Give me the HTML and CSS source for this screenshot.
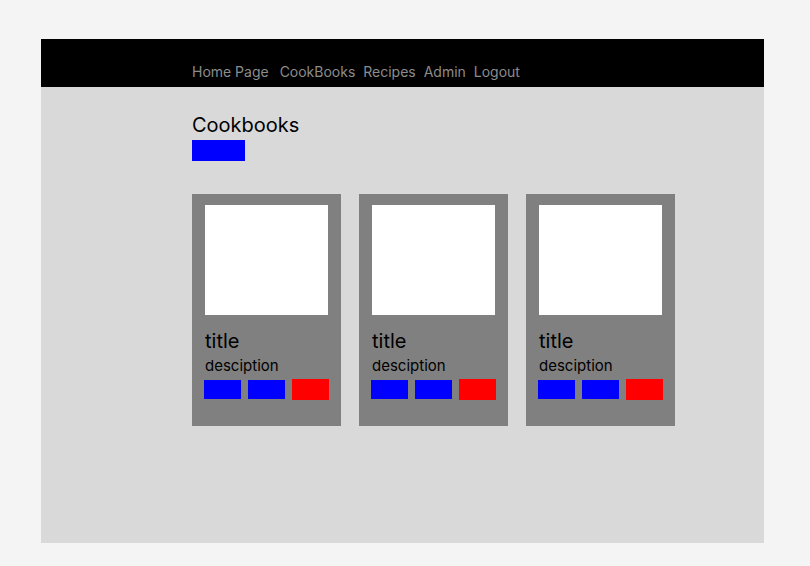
FILE: index.html
```html
<!DOCTYPE html>
<html>
<head>
<meta charset="utf-8">
<link rel="stylesheet" href="styles.css">
</head>
<body>
<div class="frame">
  <header class="header">
    <nav class="nav">
      <a class="nav-link nav-home">Home Page</a>
      <a class="nav-link">CookBooks</a>
      <a class="nav-link">Recipes</a>
      <a class="nav-link">Admin</a>
      <a class="nav-link">Logout</a>
    </nav>
  </header>
  <main class="content">
    <h1 class="page-title">Cookbooks</h1>
    <div class="add-btn"></div>
    <div class="cards">
      <div class="card">
        <div class="card-img"></div>
        <div class="card-title">title</div>
        <div class="card-desc">desciption</div>
        <div class="card-actions">
          <span class="btn btn-blue"></span>
          <span class="btn btn-blue"></span>
          <span class="btn btn-red"></span>
        </div>
      </div>
      <div class="card">
        <div class="card-img"></div>
        <div class="card-title">title</div>
        <div class="card-desc">desciption</div>
        <div class="card-actions">
          <span class="btn btn-blue"></span>
          <span class="btn btn-blue"></span>
          <span class="btn btn-red"></span>
        </div>
      </div>
      <div class="card">
        <div class="card-img"></div>
        <div class="card-title">title</div>
        <div class="card-desc">desciption</div>
        <div class="card-actions">
          <span class="btn btn-blue"></span>
          <span class="btn btn-blue"></span>
          <span class="btn btn-red"></span>
        </div>
      </div>
    </div>
  </main>
</div>
</body>
</html>
```
FILE: styles.css
```css
* { box-sizing: border-box; }
html, body { margin: 0; padding: 0; }
body {
  background: #f4f4f4;
  font-family: Inter, "Noto Sans", sans-serif;
  padding: 39px 0 0 41px;
  height: 566px;
}
.frame {
  width: 723px;
  height: 504px;
  background: #d9d9d9;
}
.header {
  height: 48px;
  background: #000;
  padding: 25px 0 0 151px;
}
.nav {
  display: flex;
  gap: 8px;
  font-size: 14px;
  line-height: 16px;
  letter-spacing: -0.01px;
}
.nav-link { color: #8c8c8c; }
.nav-home { margin-right: 3px; }
.content {
  padding: 26px 0 0 151px;
}
.page-title {
  margin: 0;
  font-size: 20px;
  line-height: 24px;
  font-weight: 400;
  color: #000;
}
.add-btn {
  margin-top: 3px;
  width: 53px;
  height: 21px;
  background: #0000ff;
}
.cards {
  display: flex;
  gap: 18px;
  margin-top: 33px;
}
.card {
  width: 149px;
  height: 232px;
  background: #808080;
  padding: 11px 13px;
}
.card-img {
  width: 123px;
  height: 110px;
  background: #fff;
}
.card-title {
  margin-top: 14px;
  font-size: 20px;
  line-height: 24px;
  color: #000;
}
.card-desc {
  margin-top: 4px;
  font-size: 15px;
  line-height: 18px;
  color: #000;
}
.card-actions {
  display: flex;
  gap: 7px;
  align-items: center;
  margin: 4px 0 0 -1px;
  height: 21px;
}
.btn {
  display: block;
  flex-shrink: 0;
  width: 37px;
  height: 19px;
}
.btn-blue { background: #0000ff; }
.btn-red { background: #ff0000; height: 21px; }
```
